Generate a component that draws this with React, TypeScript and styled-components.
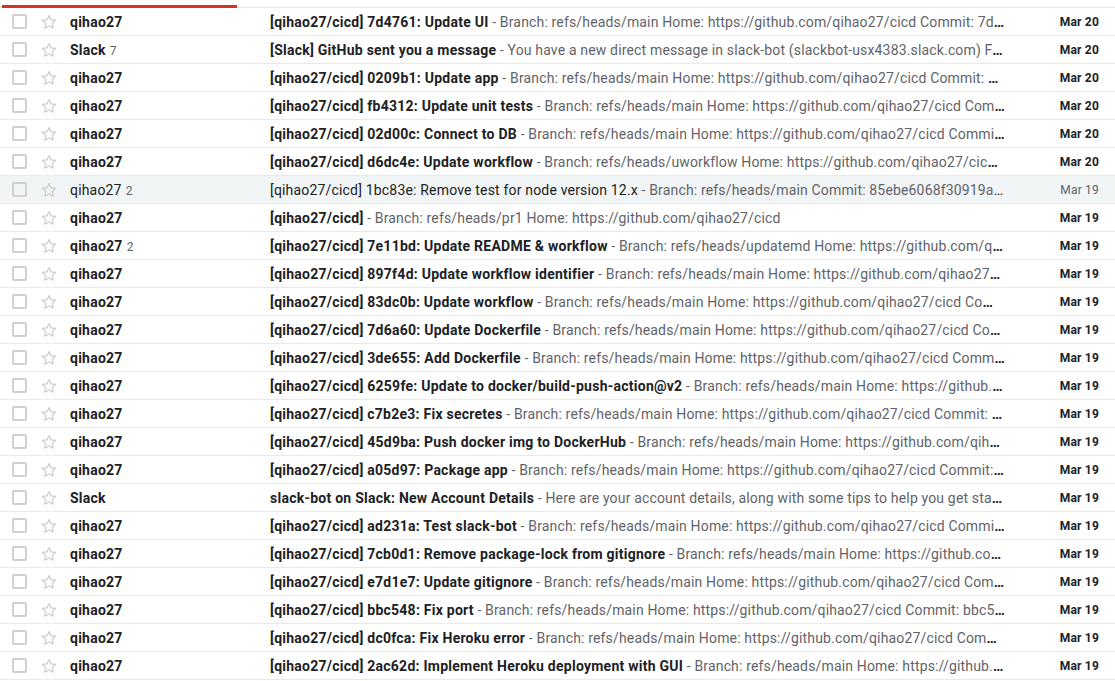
import React from "react";
import styled, { createGlobalStyle } from "styled-components";

const Global = createGlobalStyle`
  html, body { margin: 0; padding: 0; background: #fff; }
  body { font-family: Roboto, "Liberation Sans", Arial, sans-serif; -webkit-font-smoothing: antialiased; }
`;

const Page = styled.div`
  width: 1115px;
  height: 681px;
  overflow: hidden;
  background: #fff;
`;

const ProgressStrip = styled.div`
  height: 8px;
  display: flex;
  align-items: flex-end;
`;

const ProgressBar = styled.div`
  margin-left: 2px;
  width: 235px;
  height: 3px;
  background: #d93025;
`;

const List = styled.div`
  border-top: 1px solid #e8eaed;
  margin-top: -1px;
`;

const Row = styled.div<{ $read?: boolean }>`
  display: flex;
  align-items: center;
  height: 27px;
  border-bottom: 1px solid #e8eaed;
  background: ${(p) => (p.$read ? "rgba(242,245,245,1)" : "#fff")};
  color: #202124;
  font-size: 14px;
  font-weight: ${(p) => (p.$read ? 400 : 700)};
  letter-spacing: ${(p) => (p.$read ? "0.18px" : "0.25px")};
`;

const Check = styled.div`
  margin-left: 12px;
  width: 11px;
  height: 11px;
  border: 2px solid #d0d0d0;
  border-radius: 2px;
  flex: none;
`;

const StarBox = styled.div`
  margin-left: 13px;
  width: 18px;
  height: 18px;
  display: flex;
  align-items: center;
  justify-content: center;
  flex: none;
`;

const Sender = styled.div`
  margin-left: 12px;
  width: 200px;
  flex: none;
  white-space: nowrap;
  overflow: hidden;
`;

const Count = styled.span`
  font-size: 12px;
  font-weight: 400;
  letter-spacing: 0;
  color: #5f6368;
  margin-left: 4px;
`;

const Subject = styled.div`
  flex: 1;
  min-width: 0;
  white-space: nowrap;
  overflow: hidden;
  text-overflow: ellipsis;
  margin-right: 34px;
`;

const Snippet = styled.span`
  font-weight: 400;
  letter-spacing: 0.16px;
  color: #5f6368;
`;

const DateCell = styled.div<{ $read?: boolean }>`
  flex: none;
  width: 60px;
  text-align: right;
  padding-right: 16px;
  font-size: 12px;
  letter-spacing: 0.2px;
  font-weight: ${(p) => (p.$read ? 400 : 700)};
  color: ${(p) => (p.$read ? "#5f6368" : "#202124")};
`;

const Star = () => (
  <svg width="18" height="18" viewBox="0 0 24 24">
    <path
      d="M12 3.2l2.6 5.9 6.4.6-4.8 4.3 1.4 6.3L12 17l-5.6 3.3 1.4-6.3L3 9.7l6.4-.6z"
      fill="none"
      stroke="#cccccc"
      strokeWidth="1.6"
      strokeLinejoin="round"
    />
  </svg>
);

type Mail = {
  from: string;
  count?: number;
  subject: string;
  snippet: string;
  date: string;
  read?: boolean;
};

const home = "Home: https://github.com/qihao27/cicd";
const br = (b: string, hash: string) =>
  `Branch: refs/heads/${b} ${home} Commit: ${hash}a8c2f1e9b7d3 https://github.com/qihao27/cicd/commit/${hash}`;

const mails: Mail[] = [
  { from: "qihao27", subject: "[qihao27/cicd] 7d4761: Update UI", snippet: br("main", "7d4761"), date: "Mar 20" },
  { from: "Slack", count: 7, subject: "[Slack] GitHub sent you a message", snippet: "You have a new direct message in slack-bot (slackbot-usx4383.slack.com) From GitHub", date: "Mar 20" },
  { from: "qihao27", subject: "[qihao27/cicd] 0209b1: Update app", snippet: br("main", "0209b1"), date: "Mar 20" },
  { from: "qihao27", subject: "[qihao27/cicd] fb4312: Update unit tests", snippet: br("main", "fb4312"), date: "Mar 20" },
  { from: "qihao27", subject: "[qihao27/cicd] 02d00c: Connect to DB", snippet: br("main", "02d00c"), date: "Mar 20" },
  { from: "qihao27", subject: "[qihao27/cicd] d6dc4e: Update workflow", snippet: br("uworkflow", "d6dc4e"), date: "Mar 20" },
  { from: "qihao27", count: 2, read: true, subject: "[qihao27/cicd] 1bc83e: Remove test for node version 12.x", snippet: "Branch: refs/heads/main Commit: 85ebe6068f30919a2c4e0d1b7f", date: "Mar 19" },
  { from: "qihao27", subject: "[qihao27/cicd]", snippet: `Branch: refs/heads/pr1 ${home}`, date: "Mar 19" },
  { from: "qihao27", count: 2, subject: "[qihao27/cicd] 7e11bd: Update README & workflow", snippet: br("updatemd", "7e11bd"), date: "Mar 19" },
  { from: "qihao27", subject: "[qihao27/cicd] 897f4d: Update workflow identifier", snippet: br("main", "897f4d"), date: "Mar 19" },
  { from: "qihao27", subject: "[qihao27/cicd] 83dc0b: Update workflow", snippet: br("main", "83dc0b"), date: "Mar 19" },
  { from: "qihao27", subject: "[qihao27/cicd] 7d6a60: Update Dockerfile", snippet: br("main", "7d6a60"), date: "Mar 19" },
  { from: "qihao27", subject: "[qihao27/cicd] 3de655: Add Dockerfile", snippet: br("main", "3de655"), date: "Mar 19" },
  { from: "qihao27", subject: "[qihao27/cicd] 6259fe: Update to docker/build-push-action@v2", snippet: br("main", "6259fe"), date: "Mar 19" },
  { from: "qihao27", subject: "[qihao27/cicd] c7b2e3: Fix secretes", snippet: br("main", "c7b2e3"), date: "Mar 19" },
  { from: "qihao27", subject: "[qihao27/cicd] 45d9ba: Push docker img to DockerHub", snippet: br("main", "45d9ba"), date: "Mar 19" },
  { from: "qihao27", subject: "[qihao27/cicd] a05d97: Package app", snippet: br("main", "a05d97"), date: "Mar 19" },
  { from: "Slack", subject: "slack-bot on Slack: New Account Details", snippet: "Here are your account details, along with some tips to help you get started with Slack", date: "Mar 19" },
  { from: "qihao27", subject: "[qihao27/cicd] ad231a: Test slack-bot", snippet: br("main", "ad231a"), date: "Mar 19" },
  { from: "qihao27", subject: "[qihao27/cicd] 7cb0d1: Remove package-lock from gitignore", snippet: br("main", "7cb0d1"), date: "Mar 19" },
  { from: "qihao27", subject: "[qihao27/cicd] e7d1e7: Update gitignore", snippet: br("main", "e7d1e7"), date: "Mar 19" },
  { from: "qihao27", subject: "[qihao27/cicd] bbc548: Fix port", snippet: br("main", "bbc548"), date: "Mar 19" },
  { from: "qihao27", subject: "[qihao27/cicd] dc0fca: Fix Heroku error", snippet: br("main", "dc0fca"), date: "Mar 19" },
  { from: "qihao27", subject: "[qihao27/cicd] 2ac62d: Implement Heroku deployment with GUI", snippet: br("main", "2ac62d"), date: "Mar 19" },
];

export default function App() {
  return (
    <Page>
      <Global />
      <ProgressStrip>
        <ProgressBar />
      </ProgressStrip>
      <List>
        {mails.map((m, i) => (
          <Row key={i} $read={m.read}>
            <Check />
            <StarBox>
              <Star />
            </StarBox>
            <Sender>
              {m.from}
              {m.count ? <Count>{m.count}</Count> : null}
            </Sender>
            <Subject>
              {m.subject}
              <Snippet> - {m.snippet}</Snippet>
            </Subject>
            <DateCell $read={m.read}>{m.date}</DateCell>
          </Row>
        ))}
      </List>
    </Page>
  );
}
